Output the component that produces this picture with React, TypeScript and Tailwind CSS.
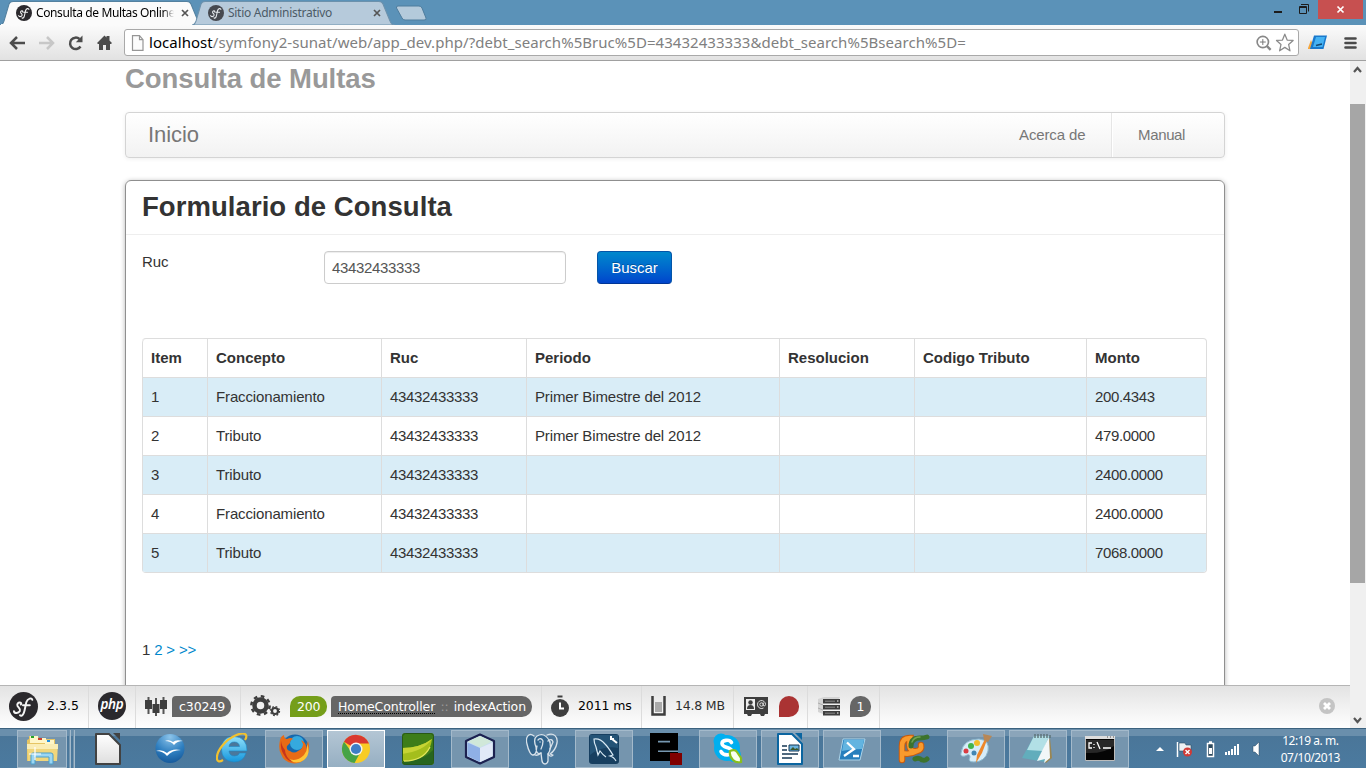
import React from "react";

const rows = [
  ["1", "Fraccionamiento", "43432433333", "Primer Bimestre del 2012", "", "", "200.4343"],
  ["2", "Tributo", "43432433333", "Primer Bimestre del 2012", "", "", "479.0000"],
  ["3", "Tributo", "43432433333", "", "", "", "2400.0000"],
  ["4", "Fraccionamiento", "43432433333", "", "", "", "2400.0000"],
  ["5", "Tributo", "43432433333", "", "", "", "7068.0000"],
];

const headers = ["Item", "Concepto", "Ruc", "Periodo", "Resolucion", "Codigo Tributo", "Monto"];

function SfLogo({ className }: { className: string }) {
  return (
    <svg viewBox="0 0 28 28" className={className}>
      <circle cx="14" cy="14" r="14" fill="#2b292d" />
      <path
        d="M4.8 18.6c.4 2.4 4.400 2.200 5.700-.3 1-2.200-1.600-3.400-2.300-4.900-.7-1.800.7-3.400 2.400-3.300 1.300.1 1.600 1.200.8 2M22.500 7.600c-.4-2.300-4.500-1.700-5.700 2-1 3.200-1.400 8-2.600 10.900-.9 2.200-2.600 3.100-3.600 1.900M13.500 12.700h6.600"
        fill="none"
        stroke="#f4f4f4"
        strokeWidth="1.900"
        strokeLinecap="round"
      />
    </svg>
  );
}

function Tab({ title, active, wide }: { title: string; active?: boolean; wide: string }) {
  return (
    <div className={`relative h-[25px] ${wide}`}>
      <svg viewBox="0 0 202 25" className="absolute inset-0 h-full w-full" preserveAspectRatio="none">
        <path
          d="M0 25C3 25 3 23 4 21L9 4Q10 1.500 13 1.500H186Q189 1.500 190 4L197 21Q198 25 202 25Z"
          fill={active ? "#fbfbfb" : "#b6cadb"}
          stroke={active ? "#54819f" : "#6c91ac"}
          strokeWidth="1"
        />
        {active && <path d="M1 25H201" stroke="#fbfbfb" strokeWidth="2" />}
      </svg>
      <div className="relative flex h-full items-center pt-[1px] pl-[16px] pr-[13px]">
        <SfLogo className={active ? "h-4 w-4 shrink-0" : "h-4 w-4 shrink-0 opacity-80"} />
        <span
          className={
            active
              ? "ml-[4px] w-[138px] overflow-hidden whitespace-nowrap bg-gradient-to-r from-black from-92% to-transparent bg-clip-text text-transparent tracking-[-0.38px]"
              : "ml-[4px] w-[138px] overflow-hidden whitespace-nowrap text-[#4c5b67] tracking-[-0.28px]"
          }
        >
          {title}
        </span>
        <svg viewBox="0 0 8 8" className="ml-[7px] h-2 w-2 shrink-0">
          <path d="M1 1l6 6M7 1L1 7" stroke="#555" strokeWidth="1.700" />
        </svg>
      </div>
    </div>
  );
}

function BrowserTop() {
  return (
    <header className="shrink-0 bg-[#5b92b8] font-['Noto_Sans',sans-serif] text-[12px]">
      <div className="flex h-[25px]">
        <Tab title="Consulta de Multas Online" active wide="w-[203px]" />
        <div className="-ml-[11px] flex">
          <Tab title="Sitio Administrativo" wide="w-[203px]" />
        </div>
        <svg viewBox="0 0 34 25" className="h-[25px] w-[34px]">
          <path d="M3 6h21q2 0 3 2l4 10q1 2-2 2H10q-2 0-3-2L1.500 8Q1 6 3 6Z" fill="#b4cadb" stroke="#4e7c9d" />
        </svg>
        <svg viewBox="0 0 100 25" className="ml-auto h-[25px] w-[100px]">
          <path d="M8 11h8v2H8z" fill="#1c1c1c" />
          <path d="M33.500 6.500h7v7h-7zM33 7.500h8M35 4.500h7.500v7" fill="none" stroke="#1c1c1c" />
          <path d="M52 0h45v19H52z" fill="#c75050" />
          <path d="M71.500 6.500l6 6M77.500 6.500l-6 6" stroke="#fff" strokeWidth="1.700" />
        </svg>
      </div>
      <div className="flex h-[36px] items-center border-b border-[#a0a0a0] bg-gradient-to-b from-[#fbfbfb] to-[#e2e2e2]">
        <svg viewBox="0 0 124 34" className="h-[34px] w-[124px] shrink-0">
          <path d="M25 17H12M17 11l-6 6 6 6" fill="none" stroke="#4c4c4c" strokeWidth="2.500" />
          <path d="M39 17h13M47 11l6 6-6 6" fill="none" stroke="#c7c7c7" strokeWidth="2.500" />
          <path d="M80.500 20.500A5.700 5.700 0 1 1 79.500 13" fill="none" stroke="#4c4c4c" strokeWidth="2.500" />
          <path d="M82.500 9.500v6.700h-6.700z" fill="#4c4c4c" />
          <path d="M97 17l7.500-7.500 2 2V10h3v4.500L112 17l-1 1h-1v6h-4v-5h-3v5h-4v-6h-1z" fill="#4c4c4c" />
        </svg>
        <div className="flex h-[27px] w-[1175px] shrink-0 items-center rounded-[3px] border border-[#a9a9a9] bg-white pl-[6px]">
          <svg viewBox="0 0 13 16" className="h-4 w-[13px]">
            <path d="M1.500.7h7l3.500 4v10.600H1.500zM8.500.7v4H12" fill="#fcfcfc" stroke="#969696" strokeWidth="1.200" />
          </svg>
          <span className="ml-[5px] whitespace-nowrap text-[15px] tracking-[0.045px] text-[#808080]">
            <span className="text-black">localhost</span>
            /symfony2-sunat/web/app_dev.php/?debt_search%5Bruc%5D=43432433333&amp;debt_search%5Bsearch%5D=
          </span>
          <svg viewBox="0 0 44 22" className="ml-auto h-[22px] w-[43px]">
            <circle cx="8" cy="10" r="5.800" fill="none" stroke="#888" strokeWidth="1.700" />
            <path d="M12 14l4 4" stroke="#888" strokeWidth="2.400" />
            <path d="M5 10h6M8 7v6" stroke="#777" />
            <path
              d="M30.500 2l2.400 6 6.100.4-4.600 4.100 1.400 6.500-5.300-3.500-5.300 3.500 1.400-6.500-4.600-4.100 6.100-.4z"
              fill="#fff"
              stroke="#8b8b8b"
              strokeWidth="1.300"
              strokeLinejoin="round"
            />
          </svg>
        </div>
        <svg viewBox="0 0 67 34" className="h-[34px] w-[67px]">
          <path d="M9 22l3-8 4 9H9z" fill="#f5a63d" />
          <path d="M15 9.500h13L24.500 23H11z" fill="#1878cc" />
          <path d="M17 11h9l-2.500 10H14z" fill="#45b2f3" />
          <path d="M17 19.500l6-1.500" stroke="#14466f" strokeWidth="1.300" />
          <path d="M46.500 12.500h10M46.500 17h10M46.500 21.500h10" stroke="#4a4a4a" strokeWidth="2.600" strokeLinecap="round" />
        </svg>
      </div>
    </header>
  );
}

function Page() {
  return (
    <main className="h-[624px] min-w-0 flex-1 overflow-hidden bg-white pl-[125px] pr-[125px] font-['Liberation_Sans',Arial,sans-serif] text-[15px] text-[#333]">
      <h1 className="h-[35px] text-[27.500px] font-bold leading-[35px] tracking-[-0.08px] text-[#999]">Consulta de Multas</h1>
      <nav className="mt-[16px] flex h-[46px] items-center rounded-[4px] border border-[#d4d4d4] bg-gradient-to-b from-white to-[#f2f2f2] text-[#777] shadow-[0_1px_4px_rgba(0,0,0,0.065)]">
        <span className="pb-[2px] pl-[22px] text-[22px] tracking-[-0.05px]">Inicio</span>
        <span className="ml-auto flex h-full w-[119px] items-center border-r border-[#e6e6e6] pl-[26px] tracking-[-0.12px]">Acerca de</span>
        <span className="flex h-full w-[112px] items-center border-l border-white pl-[25px] tracking-[-0.35px]">Manual</span>
      </nav>
      <section className="mt-[22px] h-[560px] rounded-[6px] border border-[#8f8f8f] shadow-[0_1px_5px_rgba(0,0,0,0.3)]">
        <h2 className="h-[54px] border-b border-[#eee] pl-[16px] text-[27.500px] font-bold leading-[52px] tracking-[0.06px]">
          Formulario de Consulta
        </h2>
        <div className="flex h-[103px] items-start pl-[16px] pt-[16px]">
          <label className="w-[182px] leading-[22px] tracking-[-0.1px]">Ruc</label>
          <div className="flex h-[33px] w-[242px] items-center rounded-[4px] border border-[#ccc] pl-[7px] pt-[2px] tracking-[-0.34px] text-[#555] shadow-[inset_0_1px_1px_rgba(0,0,0,0.075)]">
            43432433333
          </div>
          <button className="ml-[31px] h-[33px] w-[75px] rounded-[4px] border border-[#0355a8] border-b-[#003596] bg-gradient-to-b from-[#0088cc] to-[#0044cc] pt-px text-white [text-shadow:0_-1px_0_rgba(0,0,0,0.25)]">
            Buscar
          </button>
        </div>
        <table className="ml-[16px] w-[1065px] table-fixed border-separate border-spacing-0 overflow-hidden rounded-[4px] border border-l-0 border-[#ddd] text-left">
          <colgroup>
            <col className="w-[65px]" />
            <col className="w-[174px]" />
            <col className="w-[145px]" />
            <col className="w-[253px]" />
            <col className="w-[135px]" />
            <col className="w-[172px]" />
            <col className="w-[120px]" />
          </colgroup>
          <thead>
            <tr>
              {headers.map((h) => (
                <th key={h} className="h-[38px] border-l border-[#ddd] px-[8px] py-0 font-bold leading-[22px] first:rounded-tl-[4px]">
                  {h}
                </th>
              ))}
            </tr>
          </thead>
          <tbody>
            {rows.map((r, i) => (
              <tr key={i} className="odd:bg-[#d9edf7]">
                {r.map((c, j) => (
                  <td
                    key={j}
                    className={
                      j === 2 || j === 6
                        ? "h-[39px] whitespace-nowrap border-l border-t border-[#ddd] px-[8px] py-0 tracking-[-0.34px]"
                        : "h-[39px] whitespace-nowrap border-l border-t border-[#ddd] px-[8px] py-0 tracking-[-0.14px]"
                    }
                  >
                    {c}
                  </td>
                ))}
              </tr>
            ))}
          </tbody>
        </table>
        <p className="pl-[16px] pt-[66px] leading-[22px] tracking-[-0.17px] text-[#0088cc]">
          <span className="text-[#333]">1</span> 2 &gt; &gt;&gt;
        </p>
      </section>
    </main>
  );
}

function Scrollbar() {
  return (
    <aside className="flex w-[16px] shrink-0 flex-col items-center bg-[#f0f0f0]">
      <svg viewBox="0 0 16 43" className="h-[43px] w-4">
        <path d="M4 11l3.500-4 3.500 4" fill="none" stroke="#555" strokeWidth="2.200" />
      </svg>
      <div className="h-[479px] w-[15px] self-start bg-[#a6a6a6]" />
      <svg viewBox="0 0 16 16" className="mt-auto h-4 w-4">
        <path d="M4 6l3.500 4 3.500-4" fill="none" stroke="#555" strokeWidth="2.200" />
      </svg>
    </aside>
  );
}

function Gear({ cx, cy, r, w }: { cx: number; cy: number; r: number; w: number }) {
  const outer = r + w * 0.7;
  const dash = (outer * Math.PI) / 8;
  return (
    <g fill="none" stroke="#3e3e3e">
      <circle cx={cx} cy={cy} r={r} strokeWidth={w} />
      <circle cx={cx} cy={cy} r={outer} strokeWidth={w * 0.55} strokeDasharray={`${dash} ${dash}`} />
    </g>
  );
}

const seg = "flex h-full shrink-0 items-center border-r border-[#dcdcdc] pb-[2px]";

function DebugBar() {
  return (
    <footer className="flex h-[43px] w-full shrink-0 items-center border-t border-[#b5b5b5] bg-gradient-to-b from-[#e3e3e3] to-white font-['DejaVu_Sans',sans-serif] text-[12.500px] text-[#2f2f2f]">
      <div className={`${seg} w-[89px] pl-[9px]`}>
        <SfLogo className="h-[29px] w-[29px]" />
        <span className="ml-[9px] pt-px text-black tracking-[0.05px]">2.3.5</span>
      </div>
      <div className={`${seg} w-[47px] pl-[9px]`}>
        <span className="flex h-[28px] w-[28px] items-center justify-center rounded-full bg-[#2b292d] pb-[3px] font-['Noto_Sans',sans-serif] text-[13.500px] font-semibold italic tracking-[-0.3px] text-white">php</span>
      </div>
      <div className={`${seg} w-[105px] pl-[9px]`}>
        <svg viewBox="0 0 22 21" className="h-[21px] w-[22px]">
          <path d="M3.500 1v17M11 2v18M18.500 1v17" stroke="#555" strokeWidth="2" />
          <path d="M0 4h7v9H0zM7.500 8h7v9h-7zM15 4h7v9h-7z" fill="#3e3e3e" />
        </svg>
        <span className="ml-[5px] h-[21px] w-[59px] rounded-[10px] rounded-bl-none rounded-tl-[4px] bg-[#666] pl-[7px] leading-[21px] tracking-[-0.1px] text-white">c30249</span>
      </div>
      <div className={`${seg} w-[301px] pl-[9px]`}>
        <svg viewBox="0 0 31 24" className="h-[24px] w-[31px]">
          <Gear cx={10.500} cy={11.500} r={6} w={4.500} />
          <Gear cx={25} cy={17} r={3} w={2.200} />
        </svg>
        <span className="ml-[9px] h-[21px] w-[37px] rounded-[10px] rounded-bl-none bg-[#759e1a] pl-[7px] leading-[21px] tracking-[-0.2px] text-white">200</span>
        <span className="ml-[4px] flex h-[21px] w-[201px] justify-between whitespace-nowrap rounded-[10px] rounded-bl-none rounded-tl-[4px] bg-[#666] pl-[7px] pr-[6px] leading-[21px] text-white">
          <span className="h-[18px] border-b border-dotted border-black tracking-[-0.08px]">HomeController</span>
          <span className="text-[#999] tracking-[-0.3px]">::</span>
          <span className="tracking-[-0.1px]">indexAction</span>
        </span>
      </div>
      <div className={`${seg} w-[100px] pl-[9px]`}>
        <svg viewBox="0 0 18 22" className="h-[22px] w-[18px]">
          <circle cx="9" cy="13" r="9" fill="#3e3e3e" />
          <path d="M6.500.5h5v2h-5z" fill="#3e3e3e" />
          <path d="M9 7.500v6h4" stroke="#fff" strokeWidth="2" fill="none" />
        </svg>
        <span className="ml-[9px] whitespace-nowrap pt-px text-black tracking-[-0.1px]">2011 ms</span>
      </div>
      <div className={`${seg} w-[92px] pl-[9px]`}>
        <svg viewBox="0 0 15 20" className="h-[20px] w-[15px]">
          <path d="M1.500 0v18.500h12V0" stroke="#3e3e3e" strokeWidth="2.500" fill="none" />
          <path d="M4 6h7v10H4z" fill="#aaa" />
        </svg>
        <span className="ml-[9px] whitespace-nowrap pt-px tracking-[-0.2px]">14.8 MB</span>
      </div>
      <div className={`${seg} w-[74px] pl-[10px]`}>
        <svg viewBox="0 0 24 19" className="h-[19px] w-[24px]">
          <path d="M0 0h24v17h-3l-1 2h-3l-1-2H8l-1 2H4l-1-2H0z" fill="#3e3e3e" />
          <path d="M2 2h9v11H2z" fill="#eee" />
          <circle cx="6.500" cy="5.500" r="2.200" fill="#3e3e3e" />
          <path d="M3 12q0-4 3.500-4T10 12z" fill="#3e3e3e" />
          <circle cx="17.500" cy="7.500" r="1.700" fill="none" stroke="#ddd" />
          <path d="M19.200 5.500v3q1.800 1.500 2.300-1A4 4 0 1 0 19.500 11" fill="none" stroke="#ddd" />
        </svg>
        <span className="ml-[11px] h-[21px] w-[20px] rounded-[10px] rounded-bl-none bg-[#aa3333]" />
      </div>
      <div className={`${seg} w-[72px] pl-[10px]`}>
        <svg viewBox="0 0 22 20" className="h-[20px] w-[22px]">
          <path d="M0 3l6-2h16l-2 3H6zM0 3l5 1v14l-5-2z" fill="#d4d4d4" />
          <path d="M0 7l5 2M0 12l5 2" stroke="#aaa" />
          <path d="M5 3h17v4.500H5zM5 9h17v4.500H5zM5 15h17v4.500H5z" fill="#3e3e3e" />
          <path d="M7 5.200h10M7 11.200h10M7 17.200h10" stroke="#aaa" strokeWidth=".7" />
          <path d="M19 5h1.500M19 11h1.500M19 17h1.500" stroke="#fff" />
        </svg>
        <span className="ml-[10px] h-[21px] w-[21px] rounded-[10px] rounded-bl-none bg-[#666] text-center leading-[21px] text-white">1</span>
      </div>
      <svg viewBox="0 0 16 16" className="mb-[2px] ml-auto mr-[15px] h-4 w-4 shrink-0">
        <circle cx="8" cy="8" r="8" fill="#c4c4c4" />
        <path d="M5 5l6 6M11 5l-6 6" stroke="#fff" strokeWidth="2.800" />
      </svg>
    </footer>
  );
}

const icons: { open?: boolean; active?: boolean; stacked?: boolean; art: React.ReactNode }[] = [
  {
    open: true,
    stacked: true,
    art: (
      <g>
        <path d="M3 3h9l1 3h16v22H1V7l2-1z" fill="#e6c564" />
        <path d="M4 3h8v7H4z" fill="#fff6c8" />
        <path d="M5 3h3v2H5z" fill="#27a327" />
        <path d="M11 5h9v5h-9z" fill="#fff6c8" />
        <path d="M12 5h4v2h-4z" fill="#cf3f2c" />
        <path d="M19 7h9v4h-9z" fill="#fff6c8" />
        <path d="M21 7h3v2h-3z" fill="#238ede" />
        <path d="M1 11h31l-1 17H2z" fill="#f0d67c" />
        <path d="M1 11h31v5H1z" fill="#faedb5" />
        <path d="M5 31V22q0-2 2-2h18q2 0 2 2v9h-4v-7H9v7z" fill="#9bd6f3" stroke="#4a9fcb" />
        <path d="M9 14v13M3 21h12" stroke="#fff" strokeWidth="1.200" />
      </g>
    ),
  },
  {
    art: (
      <g>
        <defs>
          <linearGradient id="sheet" x1="0" y1="0" x2="0" y2="1">
            <stop offset="0" stopColor="#fff" />
            <stop offset="1" stopColor="#dedede" />
          </linearGradient>
        </defs>
        <path d="M4 1h13l11 11v19H4z" fill="url(#sheet)" stroke="#424242" strokeWidth="2" strokeLinejoin="round" />
        <path d="M21 0h7v7z" fill="#424242" />
      </g>
    ),
  },
  {
    art: (
      <g>
        <defs>
          <radialGradient id="ball" cx=".5" cy=".1" r=".9">
            <stop offset="0" stopColor="#8cc4ea" />
            <stop offset=".6" stopColor="#2f7fc0" />
            <stop offset="1" stopColor="#165a9c" />
          </radialGradient>
        </defs>
        <circle cx="16" cy="15.500" r="14.500" fill="url(#ball)" />
        <path d="M11 8q4-2 8 1 3-3 10-1-6 0-9 4-3-4-9-4zM2 18q6-2 11 2 5-5 14-3-9 0-14 6-4-5-11-5z" fill="#fff" />
      </g>
    ),
  },
  {
    art: (
      <g fill="none">
        <defs>
          <linearGradient id="ie" x1="0" y1="0" x2="0" y2="1">
            <stop offset="0" stopColor="#8fe0fb" />
            <stop offset="1" stopColor="#1596dc" />
          </linearGradient>
        </defs>
        <path
          d="M31 18H13q.5 5 5.500 5 4 0 5-3h6.500q-2.500 9-12 9Q5.500 28 5.500 16 6 3.500 18 3.500 31 4 31 18zM13 13.500h10.500Q23 9 18.300 9T13 13.500z"
          fill="url(#ie)"
          stroke="#1c86c4"
          strokeWidth=".6"
        />
        <path d="M7 27C-1 32-1 22 6 13 14 3 27-2 30 2q1 2-1 5" stroke="#f1c12f" strokeWidth="2.200" />
      </g>
    ),
  },
  {
    open: true,
    art: (
      <g>
        <circle cx="17" cy="15" r="13.500" fill="#1768ad" />
        <circle cx="19" cy="10" r="7" fill="#35a9de" />
        <path d="M2 7q1-4 4-5 0 4 3 4 4-2 6 0-3 1-3 4l-3 3q-1 4 3 5 4 3 8 0 5-2 5-7l-2-4q6 3 5 9l2-8q3 9-2 16A14 14 0 0 1 3 21Q0 16 2 7z" fill="#e86b15" />
        <path d="M28 9q3 7-2 13-8 8-17 3 8 8 17 2 8-7 2-18z" fill="#ffc536" />
        <path d="M3 8q-1 8 3 14 3 6 9 7-8-5-8-12-3-3-4-9z" fill="#c8341b" />
      </g>
    ),
  },
  {
    open: true,
    active: true,
    art: (
      <g>
        <circle cx="16" cy="16" r="14" fill="#f8cc25" />
        <path d="M16 16L4 8.800A14 14 0 0 1 29 10.500H16z" fill="#d93930" />
        <path d="M16 16l-4.500 3L4 8.700A14 14 0 0 0 14.500 30l5.500-10z" fill="#46a346" />
        <circle cx="16" cy="16" r="6.500" fill="#f4f4f4" />
        <circle cx="16" cy="16" r="5.100" fill="#3d7ec5" />
      </g>
    ),
  },
  {
    art: (
      <g>
        <rect width="32" height="32" rx="3" fill="#3d7d19" />
        <path d="M0 15q18 0 30-9-2 16-15 20-8 3-15 3z" fill="#a4be1c" />
        <path d="M0 15q18 0 30-9-8 12-30 15z" fill="#c6d434" />
        <path d="M1 28q20 0 30-11v12q-1 3-4 3H4q-3 0-3-4z" fill="#27651e" />
        <path d="M2 28q19 0 26-14" stroke="#e1e45a" strokeWidth="1.300" fill="none" />
        <rect x=".5" y=".5" width="31" height="31" rx="3" fill="none" stroke="#285815" />
      </g>
    ),
  },
  {
    open: true,
    art: (
      <g stroke="#1c2150" strokeWidth="1" strokeLinejoin="round">
        <path d="M16 1.500l14 6.500v16l-14 6.500L2 24V8z" fill="#c7def0" strokeWidth="2.200" />
        <path d="M4 8.500L16 14.500l12-6L16 3z" fill="#d0e8d9" stroke="none" />
        <path d="M3.500 9.500L16 15v14L3.500 23z" fill="#8fb0e6" stroke="none" />
        <path d="M28.500 9.500L16 15v14l12.500-6z" fill="#e1e9f8" stroke="none" />
      </g>
    ),
  },
  {
    art: (
      <g fill="#33658d" stroke="#d8e2ea" strokeWidth="1.300" strokeLinecap="round" strokeLinejoin="round">
        <path d="M8 3C3-1-1 4 1 11c1 5 4 14 8 10 2-2 1-5 2-8M11 3c5-3 9-1 12 4 2 4 2 10-1 14v7c-1 4-5 4-6 0l-1-8c-4 2-5-2-5-6-2-5-2-9 1-11z" />
        <path d="M21 2c7-3 11 2 10 8-1 5-4 9-7 11l3 1c-2 2-4 1-5-1M12 7q3-3 5 1 0 4-2 8M22 8q4-3 5 1l-3 7M15 20q-3 3-6 2" fill="none" />
        <path d="M14 9h.1M24 9h.1" />
      </g>
    ),
  },
  {
    open: true,
    art: (
      <g>
        <rect x="1" y="1" width="30" height="30" rx="3" fill="#173f60" />
        <path d="M2 2h28v13Q15 12 2 22z" fill="#245376" />
        <path d="M28 28q-2-4-6-5l3-1q-5-8-8-11-5-6-11-5 0 4 2 8l2 8 2-4q3 4 6 6" fill="none" stroke="#d8e9f4" strokeWidth="1.200" />
        <path d="M23 3v3h3M24 6l5 4" stroke="#fff" strokeWidth="2" fill="none" />
      </g>
    ),
  },
  {
    art: (
      <g>
        <path d="M0 0h28v20h-8v8H0z" fill="#000" />
        <path d="M8 8.600h12M8 18.200h20" stroke="#7697b0" strokeWidth="1.600" />
        <path d="M20 20h12v12H20z" fill="#800000" />
      </g>
    ),
  },
  {
    open: true,
    art: (
      <g>
        <circle cx="15" cy="15" r="13" fill="#00aff0" />
        <circle cx="9" cy="8" r="7.500" fill="#00aff0" />
        <circle cx="22" cy="22" r="7" fill="#00aff0" />
        <path d="M19.500 9.500c-2-3.500-9.500-2.500-9.500 1 0 5 10 3 10 8 0 4.500-9 4.500-11 0" stroke="#fff" strokeWidth="3.600" fill="none" strokeLinecap="round" />
        <path d="M18 18q5-2 7 1 2 3 4 6v4q-5 1-8-2-4-4-3-9z" fill="#f9fff1" stroke="#88bf1d" strokeWidth="2.200" />
      </g>
    ),
  },
  {
    open: true,
    art: (
      <g>
        <path d="M4 1h14l10 10v20H4z" fill="#fff" stroke="#0b65a0" strokeWidth="2" strokeLinejoin="round" />
        <path d="M21 0h7v7z" fill="#0b65a0" />
        <path d="M8 13h5M8 17h5M8 21h16M8 25h10" stroke="#173954" strokeWidth="1.700" />
        <path d="M15 12h10v6H15z" fill="#6ab4e0" stroke="#173954" />
        <path d="M16 17l3-3 2 2 2-1 2 2z" fill="#3c582b" />
      </g>
    ),
  },
  {
    open: true,
    art: (
      <g>
        <path d="M7 6h22l-5 21H3z" fill="#277fbd" stroke="#acd4e9" />
        <path d="M8 7h20l-2 9q-12 0-20 2z" fill="#62b4e0" />
        <path d="M11 9.500l7 6.500-10 7M17 23h6" stroke="#fff" strokeWidth="2.300" fill="none" />
      </g>
    ),
  },
  {
    art: (
      <g fill="none" strokeLinecap="round">
        <path d="M17 26q4-2 7 1 3 1 5-1" stroke="#3c732d" strokeWidth="5" />
        <path d="M4 27V13q0-8 8-8-3 15 7 13 5-1 4-6M4 20q8 2 15-2" stroke="#c85b0e" strokeWidth="6.500" />
        <path d="M4 27V13q0-8 8-8-3 15 7 13 5-1 4-6M4 20q8 2 15-2" stroke="#f99a2d" strokeWidth="4.500" />
        <path d="M13 13q0-8 9-8 4 0 7-1" stroke="#3c732d" strokeWidth="5" />
        <path d="M14 9q2-5 8-5" stroke="#72a454" strokeWidth="1.500" />
      </g>
    ),
  },
  {
    open: true,
    art: (
      <g>
        <path d="M1 20Q3 6 19 6q11 1 9 12-3 11-14 11-7 0-4-5 0-4-5-1-5 1-4-3z" fill="#d6ecf8" stroke="#8eb9cf" />
        <circle cx="6" cy="18" r="2.500" fill="#da3c42" />
        <circle cx="11" cy="13" r="3" fill="#41b44c" />
        <circle cx="17" cy="10" r="3" fill="#f1bd2a" />
        <circle cx="14" cy="20" r="2.500" fill="#4286b2" />
        <path d="M27 7l-5 13-6 10 1-8 8-16z" fill="#ed872b" />
        <path d="M23 1l9 2-4 6-4-2z" fill="#b88756" />
      </g>
    ),
  },
  {
    open: true,
    art: (
      <g>
        <path d="M28 5l2 20-6 5-3-4z" fill="#9b8651" />
        <path d="M12 3h15l-4 26L0 25z" fill="#62adbc" />
        <path d="M12 3h15l-6 15-16-1z" fill="#b2e0e6" />
        <path d="M27 4l1 21-6 5 1-4-8 2z" fill="#f2f7f8" />
        <path d="M13 1v4M16 1v4M19 1v4M22 1v4M25 1v4M28 2v3" stroke="#5a7175" strokeWidth="1.400" />
      </g>
    ),
  },
  {
    open: true,
    art: (
      <g>
        <path d="M1.500 3.500h29v24h-29z" fill="#050505" stroke="#bcbcbc" />
        <path d="M1 3h30v3H1z" fill="#ddd" />
        <path d="M23 4h1M26 4h1M29 4h1" stroke="#555" />
        <path d="M2 7h28v6q-10 8-28 7z" fill="#272727" />
        <path d="M8 10H5v5h3M10 11v1M10 14v1M13 9l3 7M19 15h8" stroke="#fff" fill="none" strokeWidth="1.300" />
      </g>
    ),
  },
];

function Taskbar() {
  return (
    <div className="flex h-[40px] shrink-0 items-center gap-[4px] border-t border-[#3d637f] bg-[linear-gradient(to_bottom,#6a8fac_0px,#6a8fac_7px,#4a7699_7px,#4b7a9f_100%)] pl-[17px] font-['Noto_Sans',sans-serif]">
      {icons.map((it, i) => (
        <div
          key={i}
          className={
            it.active
              ? "flex h-[38px] w-[58px] shrink-0 items-center justify-center border border-white bg-gradient-to-b from-[#b4c6d4] to-[#96afc2]"
              : it.stacked
                ? "flex h-[38px] w-[58px] shrink-0 items-stretch gap-[2px]"
                : it.open
                  ? "flex h-[38px] w-[58px] shrink-0 items-center justify-center border border-[#a4bacb] bg-[linear-gradient(to_bottom,#8ba5ba_6px,#7595ae_6px)]"
                  : "flex h-[38px] w-[58px] shrink-0 items-center justify-center"
          }
        >
          {it.stacked ? (
            <>
              <span className="flex w-[50px] items-center justify-center border border-[#a4bacb] bg-[linear-gradient(to_bottom,#8ba5ba_6px,#7595ae_6px)]">
                <svg viewBox="0 0 32 32" className="h-8 w-8">{it.art}</svg>
              </span>
              <span className="w-[2px] border-r border-[#a4bacb] bg-[#7595ae]" />
              <span className="w-[2px] border-r border-[#a4bacb] bg-[#7595ae]" />
            </>
          ) : (
            <svg viewBox="0 0 32 32" className="h-8 w-8">{it.art}</svg>
          )}
        </div>
      ))}
      <svg viewBox="0 0 110 24" className="ml-[22px] h-6 w-[110px] shrink-0">
        <path d="M1 14l4-4 4 4z" fill="#fff" />
        <path d="M22.500 5v15" stroke="#fff" strokeWidth="1.500" />
        <path d="M24 6h6l1 2h5v7h-6l-1-1h-5z" fill="#edf1f4" stroke="#2d4d65" strokeWidth=".6" />
        <circle cx="32.500" cy="15" r="4.500" fill="#d13a36" />
        <path d="M30.500 13l4 4M34.500 13l-4 4" stroke="#fff" strokeWidth="1.400" />
        <path d="M52.500 6.500h6v13h-6zM54 5h3" fill="#2c4a5f" stroke="#fff" strokeWidth="1.500" />
        <path d="M54 11h3v6h-3z" fill="#fff" />
        <path d="M70 15h2v3h-2zM73 14h2v4h-2zM76 12h2v6h-2zM79 9h2v9h-2zM82 7h2v11h-2z" fill="#fff" />
        <path d="M98 9h2l4-4v14l-4-4h-2z" fill="#fff" stroke="#2d4d65" strokeWidth=".5" />
      </svg>
      <div className="ml-auto mr-[26px] shrink-0 whitespace-nowrap pt-[1px] text-center text-[12px] leading-[17px] tracking-[-0.45px] text-white">
        <div>12:19 a. m.</div>
        <div>07/10/2013</div>
      </div>
    </div>
  );
}

export default function App() {
  return (
    <div className="flex h-[768px] w-[1366px] flex-col overflow-hidden bg-white">
      <BrowserTop />
      <div className="flex h-[667px] shrink-0">
        <div className="flex min-w-0 flex-1 flex-col">
          <Page />
          <DebugBar />
        </div>
        <Scrollbar />
      </div>
      <Taskbar />
    </div>
  );
}
